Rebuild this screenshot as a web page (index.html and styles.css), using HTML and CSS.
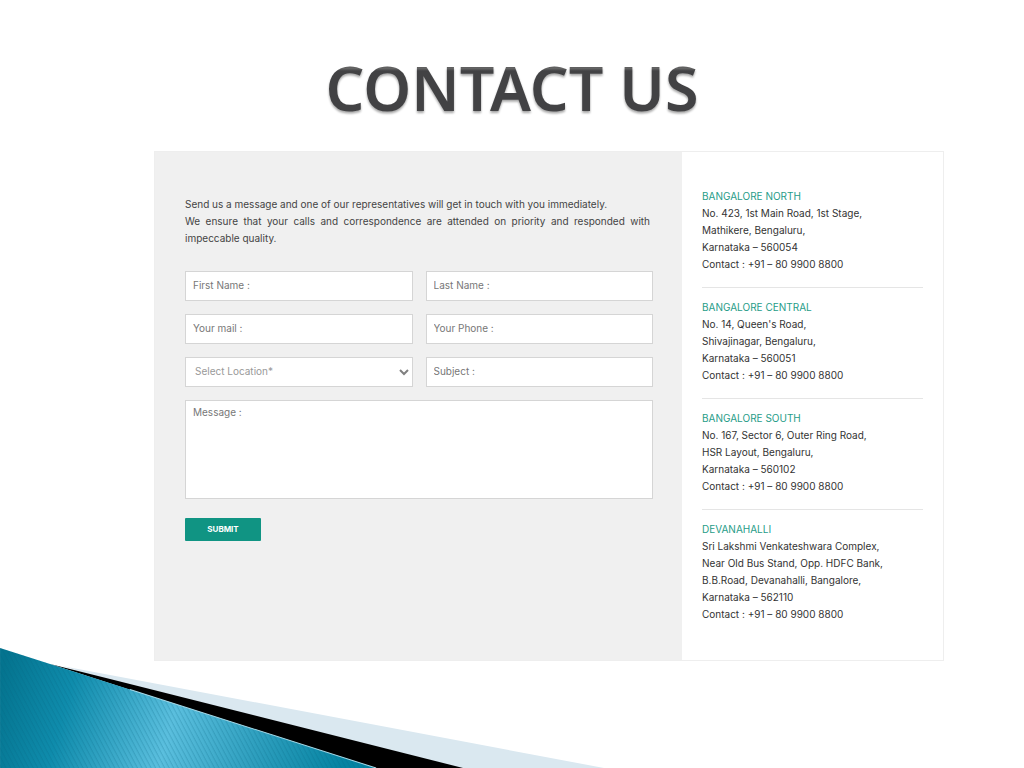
FILE: index.html
```html
<!DOCTYPE html>
<html lang="en">
<head>
<meta charset="utf-8">
<meta name="viewport" content="width=device-width, initial-scale=1">
<title>Contact Us</title>
<link rel="stylesheet" href="styles.css">
</head>
<body>
<div class="page">
  <svg class="wave" viewBox="0 0 604 120" aria-hidden="true">
    <defs>
      <linearGradient id="teal" gradientUnits="userSpaceOnUse" x1="0" y1="30" x2="340" y2="130">
        <stop offset="0" stop-color="#04748f"/>
        <stop offset="0.2" stop-color="#0f8cac"/>
        <stop offset="0.5" stop-color="#5bbfde"/>
        <stop offset="0.75" stop-color="#2e9fbe"/>
        <stop offset="1" stop-color="#0483a1"/>
      </linearGradient>
      <pattern id="stripes" width="4" height="4" patternUnits="userSpaceOnUse" patternTransform="rotate(-28)">
        <path d="M1 0V4" stroke="#04627c" stroke-opacity="0.24" stroke-width="1"/>
      </pattern>
    </defs>
    <path d="M62 18L110 27L604 120H400Z" fill="#dae8f0"/>
    <path d="M50 16L110 31L463 120H372Z" fill="#000"/>
    <path d="M0 0L50 16L376 120H0Z" fill="url(#teal)"/>
    <path d="M0 0L50 16L376 120H0Z" fill="url(#stripes)"/>
    <path d="M130 41.500L376 120" fill="none" stroke="#a5d9e8" stroke-width="1"/>
  </svg>

  <h1 class="title">CONTACT US</h1>

  <main class="card">
    <section class="message-panel">
      <div class="intro">
        <p>Send us a message and one of our representatives will get in touch with you immediately.</p>
        <p>We ensure that your calls and correspondence are attended on priority and responded with impeccable quality.</p>
      </div>
      <form class="form">
        <input class="field" type="text" placeholder="First Name :" aria-label="First Name">
        <input class="field" type="text" placeholder="Last Name :" aria-label="Last Name">
        <input class="field" type="email" placeholder="Your mail :" aria-label="Your mail">
        <input class="field" type="tel" placeholder="Your Phone :" aria-label="Your Phone">
        <div class="select-wrap">
          <select class="field select" aria-label="Select Location">
            <option>Select Location*</option>
            <option>Bangalore North</option>
            <option>Bangalore Central</option>
            <option>Bangalore South</option>
            <option>Devanahalli</option>
          </select>
          <svg class="chevron" viewBox="0 0 10 7" aria-hidden="true"><path d="M1 1L5 5L9 1" fill="none" stroke="#808080" stroke-width="2"/></svg>
        </div>
        <input class="field" type="text" placeholder="Subject :" aria-label="Subject">
        <textarea class="field message" placeholder="Message :" aria-label="Message"></textarea>
        <button class="submit" type="submit">SUBMIT</button>
      </form>
    </section>

    <aside class="offices">
      <address class="office">
        <h2 class="office-name">BANGALORE NORTH</h2>
        No. 423, 1st Main Road, 1st Stage,<br>
        Mathikere, Bengaluru,<br>
        Karnataka – 560054<br>
        Contact : +91 – 80 9900 8800
      </address>
      <address class="office">
        <h2 class="office-name">BANGALORE CENTRAL</h2>
        No. 14, Queen's Road,<br>
        Shivajinagar, Bengaluru,<br>
        Karnataka – 560051<br>
        Contact : +91 – 80 9900 8800
      </address>
      <address class="office">
        <h2 class="office-name">BANGALORE SOUTH</h2>
        No. 167, Sector 6, Outer Ring Road,<br>
        HSR Layout, Bengaluru,<br>
        Karnataka – 560102<br>
        Contact : +91 – 80 9900 8800
      </address>
      <address class="office">
        <h2 class="office-name">DEVANAHALLI</h2>
        Sri Lakshmi Venkateshwara Complex,<br>
        Near Old Bus Stand, Opp. HDFC Bank,<br>
        B.B.Road, Devanahalli, Bangalore,<br>
        Karnataka – 562110<br>
        Contact : +91 – 80 9900 8800
      </address>
    </aside>
  </main>
</div>
</body>
</html>
```
FILE: styles.css
```css
* {
  box-sizing: border-box;
}

body {
  margin: 0;
  background: #fff;
  font-family: Inter, Roboto, "Liberation Sans", sans-serif;
  font-size: 10px;
  line-height: 17px;
  color: #333;
}

.page {
  position: relative;
  min-height: 100vh;
  padding: 48px 80px 104px 154px;
}

.wave {
  position: absolute;
  left: 0;
  bottom: 0;
  width: 59%;
}

.title {
  margin: 0 0 23px -74px;
  font-family: "Noto Sans", "Open Sans", sans-serif;
  font-size: 61px;
  font-weight: 600;
  line-height: 80px;
  text-align: center;
  color: transparent;
  background: linear-gradient(#444 18px, #6a6a6a 20px, #424244 23px);
  background-clip: text;
  -webkit-background-clip: text;
  filter: drop-shadow(0 2px 1px rgba(0, 0, 0, 0.35));
}

.card {
  position: relative;
  display: grid;
  grid-template-columns: 527fr 261fr;
  border: 1px solid #eee;
  background: #fff;
}

.message-panel {
  padding: 44px 29px 44px 30px;
  background: #f0f0f0;
}

.intro {
  margin-bottom: 24px;
  padding-right: 3px;
  color: #444;
  text-align: justify;
}

.intro p {
  margin: 0;
}

.form {
  display: grid;
  grid-template-columns: 1fr 1fr;
  gap: 13px;
}

.field {
  width: 100%;
  height: 30px;
  margin: 0;
  padding: 0 7px 2px;
  border: 1px solid #d5d5d5;
  border-radius: 0;
  background: #fff;
  font: inherit;
  color: #777;
}

.field::placeholder {
  color: #777;
  opacity: 1;
}

.select-wrap {
  position: relative;
}

.select {
  display: block;
  padding: 0 9px 2px;
  appearance: none;
  color: #999;
}

.chevron {
  position: absolute;
  top: 12px;
  right: 4px;
  width: 10px;
  height: 7px;
  pointer-events: none;
}

.message {
  display: block;
  grid-column: 1 / -1;
  height: 99px;
  padding: 3px 7px;
  resize: none;
}

.submit {
  justify-self: start;
  width: 76px;
  height: 23px;
  margin-top: 6px;
  padding: 0;
  border: 0;
  border-radius: 1px;
  background: #109483;
  font: inherit;
  font-size: 8px;
  font-weight: 700;
  color: #fff;
}

.offices {
  padding: 36px 20px 37px;
}

.office {
  font-style: normal;
}

.office + .office {
  margin-top: 14px;
  padding-top: 11px;
  border-top: 1px solid #e5e5e5;
}

.office-name {
  margin: 0;
  font-size: inherit;
  font-weight: 400;
  color: #1f9c88;
}

@media (max-width: 760px) {
  .page {
    padding-left: 24px;
    padding-right: 24px;
  }

  .title {
    margin-left: 0;
  }

  .card {
    grid-template-columns: 1fr;
  }
}
```
